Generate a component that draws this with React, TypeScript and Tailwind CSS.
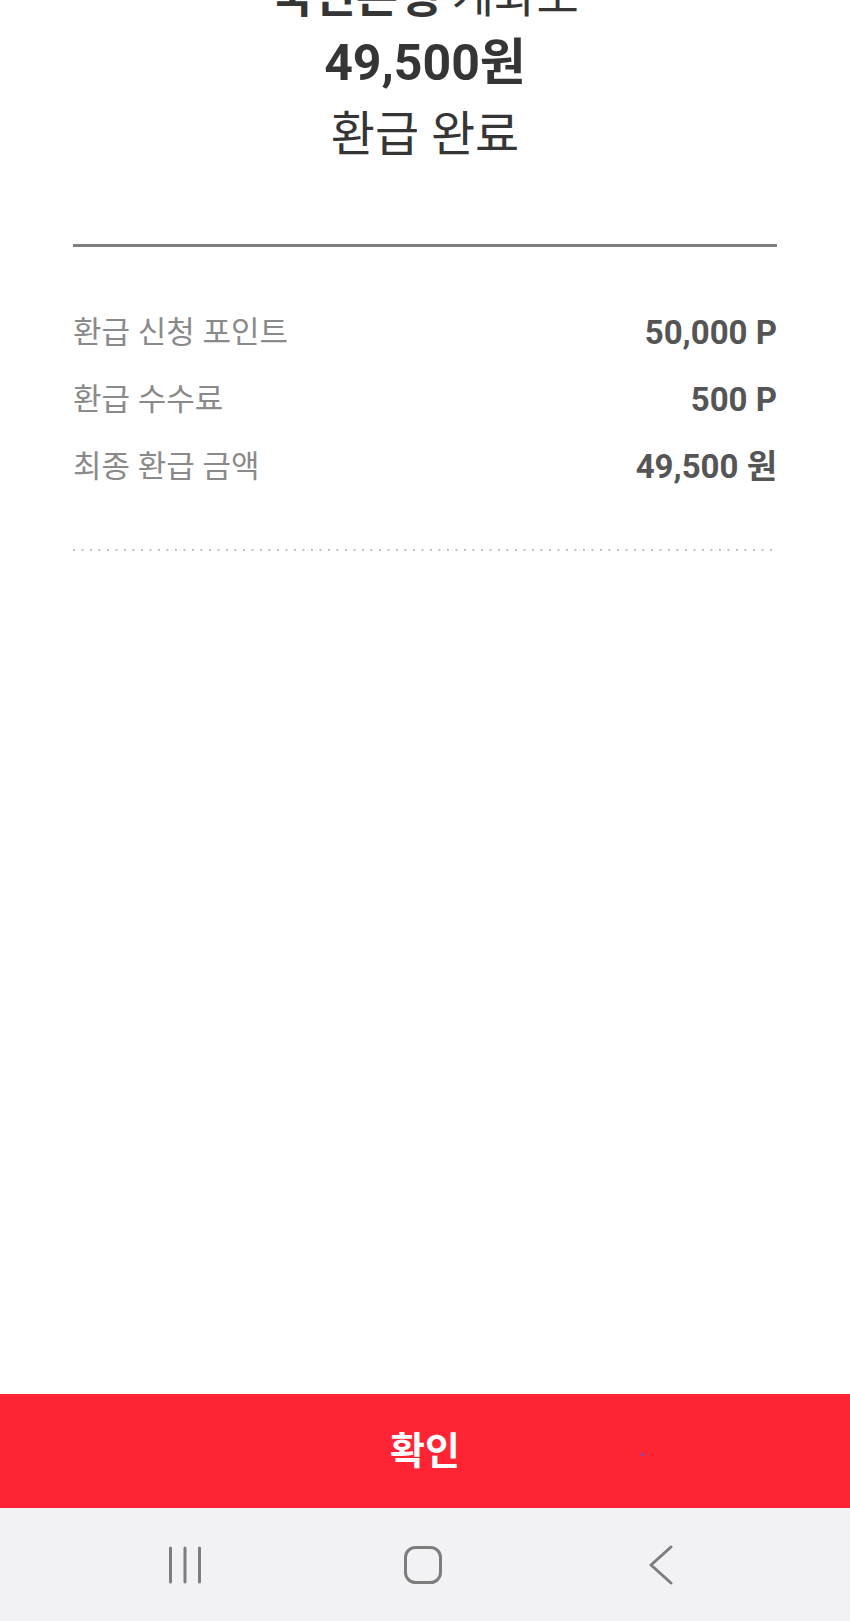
const rows = [
  { label: "환급 신청 포인트", value: "50,000 P" },
  { label: "환급 수수료", value: "500 P" },
  { label: "최종 환급 금액", value: "49,500 원" },
];

const NavBar = () => (
  <div className="flex h-[113px] items-center justify-center gap-[178px] bg-[#f2f1f4] pr-[5px]">
    <div className="flex w-[60px] justify-center">
      <svg width="34" height="38" viewBox="0 0 34 38" fill="none">
        <path d="M2.5 2v34M17 2v34M31.5 2v34" stroke="#7d7d7d" strokeWidth="3" strokeLinecap="round" />
      </svg>
    </div>
    <div className="flex w-[60px] justify-center">
      <svg width="38" height="38" viewBox="0 0 38 38" fill="none">
        <rect x="1.5" y="1.5" width="35" height="35" rx="10" stroke="#7d7d7d" strokeWidth="3" />
      </svg>
    </div>
    <div className="flex w-[60px] justify-center">
      <svg width="26" height="40" viewBox="0 0 26 40" fill="none">
        <path d="M23 2L3 20l20 18" stroke="#7d7d7d" strokeWidth="3" strokeLinecap="round" strokeLinejoin="round" />
      </svg>
    </div>
  </div>
);

const App = () => {
  return (
    <div className="flex h-[1621px] flex-col overflow-hidden bg-white font-['Roboto','Noto_Sans_CJK_KR',sans-serif]">
      {/* Summary */}
      <div className="flex-1 px-[73px]">
        <div className="-mt-[39px] flex flex-col items-center text-[#353535]">
          <p className="text-[46px] leading-[70px]">
            <span className="font-bold">국민은행</span> 계좌로
          </p>
          <p className="text-[50px] font-bold leading-[64px]">49,500원</p>
          <p className="text-[48px] leading-[80px]">환급 완료</p>
        </div>
        <div className="mt-[69px] h-[3px] bg-[#7f7f7f]" />

        {/* Detail rows */}
        <div className="mt-[52px]">
          {rows.map((row) => (
            <div key={row.label} className="flex h-[67px] items-center justify-between leading-[67px]">
              <span className="text-[31px] text-[#8a8a8a]">{row.label}</span>
              <span className="text-[33px] font-bold text-[#555555]">{row.value}</span>
            </div>
          ))}
        </div>
        <div className="mt-[49px] h-[2px] bg-[linear-gradient(to_right,#bdbdbd_2px,transparent_2px)] bg-[length:8.5px_2px] bg-repeat-x" />
      </div>

      {/* Confirm button */}
      <button className="relative flex h-[114px] w-full items-center justify-center bg-[#fe2434] text-[38px] font-bold text-white">
        확인
        <span className="absolute left-[641px] top-[59px] h-[3px] w-[3px] rounded-full bg-[#6a4fd8]" />
      </button>

      <NavBar />
    </div>
  );
};

export default App;
